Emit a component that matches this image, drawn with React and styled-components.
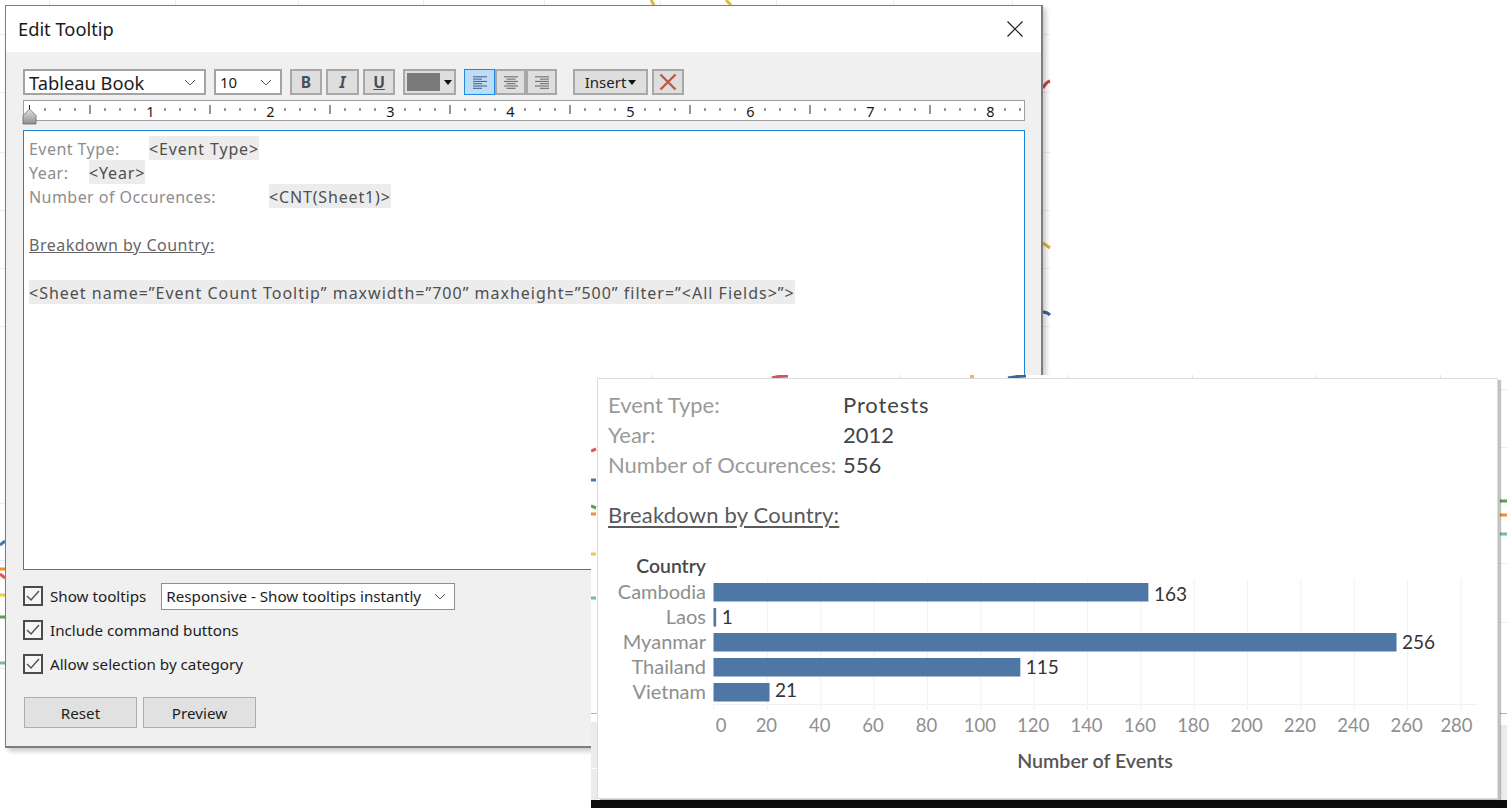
import React from "react";
import styled, { createGlobalStyle } from "styled-components";

const GlobalStyle = createGlobalStyle`
  html, body { margin: 0; padding: 0; background: #fff; }
  body { font-family: "Noto Sans", "Liberation Sans", sans-serif; }
`;

const UI = `"Noto Sans", "Liberation Sans", sans-serif`;
const BOOK = `"Lato", "Noto Sans", sans-serif`;

const Stage = styled.div`
  position: relative;
  width: 1507px;
  height: 808px;
  overflow: hidden;
  background: #fff;
`;
const BackdropArt = styled.svg`
  position: absolute;
  left: 0;
  top: 0;
`;
const Dialog = styled.section`
  position: absolute;
  left: 5px;
  top: 5px;
  width: 1038px;
  height: 743px;
  box-sizing: border-box;
  border: 1px solid #7d7d7d;
  border-right-width: 2px;
  border-bottom-width: 2px;
  background: #f0f0f0;
  box-shadow: 3px 3px 5px rgba(0, 0, 0, 0.22);
  display: flex;
  flex-direction: column;
`;
const TitleBar = styled.header`
  height: 46px;
  box-sizing: border-box;
  flex: none;
  background: #fff;
  display: flex;
  align-items: center;
  justify-content: space-between;
  padding: 0 18px 1px 12px;
  font: 400 18.3px ${UI};
  color: #1a1a1a;
`;
const Body = styled.div`
  padding: 17px 16px 0 17px;
  display: flex;
  flex-direction: column;
`;
const Toolbar = styled.div`
  display: flex;
  align-items: stretch;
  height: 26px;
`;
const SelectBox = styled.div`
  box-sizing: border-box;
  width: ${(p) => p.$w}px;
  height: ${(p) => p.$h || 26}px;
  margin: ${(p) => p.$m || "0"};
  border-style: solid;
  border-color: ${(p) => (p.$thick ? "#a3a3a3" : "#8f8f8f")};
  border-width: ${(p) => (p.$thick ? "2px" : "1px")};
  background: #fff;
  display: flex;
  align-items: center;
  justify-content: space-between;
  padding: ${(p) => p.$pad || "0 8px 0 4px"};
  font: 400 ${(p) => p.$fs}px ${UI};
  color: #1d1d1d;
  white-space: nowrap;
`;
const ToolButton = styled.div`
  box-sizing: border-box;
  width: ${(p) => p.$w}px;
  margin-left: ${(p) => p.$ml || 0}px;
  background: ${(p) => (p.$active ? "#bfdcf7" : "#dedede")};
  border: ${(p) => (p.$active ? "1px solid #1e88e5" : "2px solid #a8a8a8")};
  display: flex;
  align-items: center;
  justify-content: center;
  color: #47505c;
  font: ${(p) => p.$style || "700"} 15.5px ${UI};
  text-decoration: ${(p) => (p.$under ? "underline" : "none")};
`;
const ColorButton = styled(ToolButton)`
  justify-content: flex-start;
  gap: 4px;
  padding-left: 2px;
`;
const Swatch = styled.span`
  width: 33px;
  height: 18px;
  background: #7a7a7a;
`;
const Caret = styled.span`
  width: 0;
  height: 0;
  border-left: 4.5px solid transparent;
  border-right: 4.5px solid transparent;
  border-top: 5px solid #111;
`;
const InsertButton = styled(ToolButton)`
  font: 400 15px ${UI};
  color: #222;
  gap: 2px;
`;
const Ruler = styled.svg`
  display: block;
  margin-top: 5px;
  overflow: visible;
`;
const RulerDigit = styled.text`
  font: 400 14.5px ${UI};
  fill: #1a1a1a;
  text-anchor: middle;
`;
const Editor = styled.div`
  box-sizing: border-box;
  height: 440px;
  margin-top: 9px;
  border: 1px solid #1a83d6;
  background: #fff;
  padding: 5px 5px;
  font: 400 16px ${UI};
`;
const EditorLine = styled.div`
  height: 24px;
  line-height: 27px;
  display: flex;
  white-space: nowrap;
`;
const Caption = styled.span`
  width: ${(p) => p.$tab}px;
  flex: none;
  color: #8d8d8d;
  letter-spacing: 0.45px;
`;
const Chip = styled.span`
  background: #ececec;
  color: #4f4f4f;
  height: 24px;
  letter-spacing: ${(p) => p.$ls || 0.85}px;
`;
const Underlined = styled.span`
  color: #666;
  text-decoration: underline;
  letter-spacing: 0.5px;
`;
const Options = styled.div`
  margin-top: 9px;
  display: flex;
  flex-direction: column;
`;
const OptionRow = styled.div`
  height: 34px;
  display: flex;
  align-items: center;
  font: 400 15.2px ${UI};
  color: #1d1d1d;
  white-space: nowrap;
`;
const CheckBox = styled.span`
  box-sizing: border-box;
  width: 20px;
  height: 20px;
  flex: none;
  border: 2px solid #4b4b4b;
  background: #f6f6f6;
  margin-right: 7px;
  display: flex;
  align-items: center;
  justify-content: center;
`;
const Actions = styled.div`
  display: flex;
  gap: 6px;
  margin: 16px 0 0 1px;
`;
const PushButton = styled.div`
  box-sizing: border-box;
  width: 113px;
  height: 31px;
  background: #e1e1e1;
  border: 1px solid #adadad;
  display: flex;
  align-items: center;
  justify-content: center;
  font: 400 15.2px ${UI};
  color: #1d1d1d;
`;
const Shot = styled.div`
  position: absolute;
  left: 591px;
  top: 375px;
  width: 916px;
  height: 433px;
  background: #fff;
`;
const ShotEdge = styled.div`
  position: absolute;
  left: 0;
  right: 0;
  bottom: 0;
  height: 8px;
  background: #0c0c0c;
`;
const Popup = styled.section`
  position: absolute;
  left: 6px;
  top: 3px;
  width: 901px;
  height: 421px;
  box-sizing: border-box;
  border: 1px solid #dcdcdc;
  background: #fff;
  box-shadow: 3px 2px 1px rgba(0, 0, 0, 0.24);
`;
const Summary = styled.div`
  padding: 11px 0 0 10px;
  font: 400 22px ${BOOK};
`;
const SummaryRow = styled.div`
  display: grid;
  grid-template-columns: 235px auto;
  height: 30px;
  line-height: 30px;
  white-space: nowrap;
`;
const SummaryLabel = styled.span`
  color: #9a9a9a;
`;
const SummaryValue = styled.span`
  color: #444;
  letter-spacing: ${(p) => p.$ls || 0}px;
`;
const SummaryHeading = styled.div`
  margin-top: 20px;
  height: 30px;
  line-height: 30px;
  color: #5a5a5a;
  text-decoration: underline;
  text-underline-offset: 3px;
  letter-spacing: 0.2px;
`;
const ChartSvg = styled.svg`
  display: block;
  margin-top: 15px;
`;
const CountryName = styled.text`
  font: 400 20px ${BOOK};
  fill: #8e8e8e;
  text-anchor: end;
`;
const CountryHead = styled.text`
  font: 600 19.4px ${BOOK};
  fill: #4a4a4a;
  text-anchor: end;
`;
const BarValue = styled.text`
  font: 400 19px ${BOOK};
  fill: #333;
`;
const TickLabel = styled.text`
  font: 400 18.5px ${BOOK};
  fill: #8f8f8f;
  text-anchor: middle;
`;
const AxisTitle = styled.text`
  font: 600 19.6px ${BOOK};
  fill: #555;
  text-anchor: middle;
`;

const Chevron = ({ w = 12, h = 7, c = "#5c5c5c" }) => (
  <svg width={w} height={h} viewBox="0 0 12 7" fill="none">
    <path d="M1 1l5 5 5-5" stroke={c} strokeWidth="1" />
  </svg>
);

const Tick = () => (
  <svg width="14" height="12" viewBox="0 0 14 12" fill="none">
    <path d="M1 6l4 4 8-9" stroke="#555" strokeWidth="1.5" />
  </svg>
);

const AlignIcon = ({ kind, c = "#5d6670" }) => {
  const rows = [0, 1, 2, 3, 4, 5];
  return (
    <svg width="14" height="13" viewBox="0 0 14 13">
      {rows.map((i) => {
        const w = i % 2 === 0 ? 14 : 9;
        const x = kind === "left" ? 0 : kind === "right" ? 14 - w : (14 - w) / 2;
        return <rect key={i} x={x} y={i * 2.3 + 0.3} width={w} height="1" fill={c} />;
      })}
    </svg>
  );
};

const RulerArt = () => {
  const smalls = [];
  const halves = [];
  const digits = [];
  for (let i = 0; i <= 8; i++) {
    const o = 6.5 + i * 120;
    [15, 30, 45, 75, 90, 105].forEach((d) => {
      if (o + d < 1000) smalls.push(o + d);
    });
    if (i < 8) {
      halves.push(o + 60);
      digits.push({ n: i + 1, x: o + 121 });
    }
  }
  return (
    <Ruler width="1002" height="21" viewBox="0 0 1002 21">
      <rect x="0.5" y="0.5" width="1001" height="20" fill="#fff" stroke="#9e9e9e" />
      <rect x="6" y="5" width="1" height="5" fill="#222" />
      {smalls.map((x) => (
        <rect key={x} x={x} y="8" width="1" height="3" fill="#333" />
      ))}
      {halves.map((x) => (
        <rect key={x} x={x} y="5" width="1" height="9" fill="#333" />
      ))}
      {digits.map((d) => (
        <RulerDigit key={d.n} x={d.x} y="17">
          {d.n}
        </RulerDigit>
      ))}
      <defs>
        <linearGradient id="thumb" x1="0" y1="0" x2="0" y2="1">
          <stop offset="0" stopColor="#e4e4e4" />
          <stop offset="1" stopColor="#8f8f8f" />
        </linearGradient>
      </defs>
      <path d="M6.5 9L13 15.5V24H0V15.5Z" fill="url(#thumb)" stroke="#666" strokeWidth="0.8" />
    </Ruler>
  );
};

const Curve = ({ d, c }) => <path d={d} fill="none" stroke={c} strokeWidth="3" />;

const Backdrop = () => (
  <BackdropArt width="1507" height="808" viewBox="0 0 1507 808">
    {[49, 175, 298, 423, 544, 660, 776, 893, 1012].map((x) => (
      <rect key={x} x={x} y="0" width="1" height="5" fill="#ececec" />
    ))}
    {[34, 92, 152, 210, 268, 326, 503, 560, 668].map((y) => (
      <rect key={y} x="0" y={y} width="5" height="1" fill="#ececec" />
    ))}
    {[34, 92, 152, 210, 268, 326].map((y) => (
      <rect key={y} x="1042" y={y} width="8" height="1" fill="#ececec" />
    ))}
    <Curve d="M651 0L654 5" c="#e2b93b" />
    <Curve d="M726 0L731 5" c="#e2b93b" />
    <Curve d="M1043 88C1045 84 1047 82 1050 81" c="#c8434d" />
    <Curve d="M1043 243L1050 248" c="#dcb13a" />
    <Curve d="M1043 312C1046 312 1048 313 1050 315" c="#34679c" />
    <Curve d="M0 545L5 541" c="#4e79a7" />
    <Curve d="M0 569L5 569" c="#f28e2b" />
    <Curve d="M0 574L5 578" c="#e15759" />
    <Curve d="M0 595L5 595" c="#edc948" />
    <Curve d="M0 617L5 617" c="#59a14f" />
    <Curve d="M0 663L5 663" c="#76b7b2" />
  </BackdropArt>
);

const ShotBackground = () => (
  <BackdropArt width="916" height="433" viewBox="591 375 916 433">
    {[652, 776, 900, 1068, 1192, 1316, 1440].map((x) => (
      <rect key={x} x={x} y="375" width="1" height="3" fill="#e6e6e6" />
    ))}
    <rect x="591" y="722" width="6" height="78" fill="#ebebeb" />
    <rect x="1500" y="725" width="7" height="75" fill="#ebebeb" />
    <rect x="591" y="713" width="6" height="1" fill="#b5b5b5" />
    <rect x="1500" y="713" width="7" height="1" fill="#b5b5b5" />
    <rect x="591" y="768" width="6" height="1" fill="#fff" />
    {[389, 447, 563, 622].map((y) => (
      <rect key={y} x="1500" y={y} width="7" height="1" fill="#ececec" />
    ))}
    <path d="M772 378C777 376 783 376 788 376" fill="none" stroke="#d9525c" strokeWidth="3" />
    <rect x="970" y="375" width="4" height="3" fill="#e6c04a" />
    <path d="M1008 378C1013 377 1019 376 1026 376" fill="none" stroke="#34679c" strokeWidth="3" />
    <Curve d="M591 451L596 449" c="#e15759" />
    <Curve d="M591 480L596 480" c="#4e79a7" />
    <Curve d="M591 506L596 508" c="#59a14f" />
    <Curve d="M591 514L596 514" c="#f28e2b" />
    <Curve d="M591 554L596 554" c="#edc948" />
    <Curve d="M591 598L596 598" c="#76b7b2" />
    <Curve d="M1500 501L1507 501" c="#59a14f" />
    <Curve d="M1500 515L1507 515" c="#f28e2b" />
    <Curve d="M1500 534L1507 534" c="#76b7b2" />
  </BackdropArt>
);

const COUNTRIES = [
  { name: "Cambodia", value: 163, lift: 18 },
  { name: "Laos", value: 1, lift: 16 },
  { name: "Myanmar", value: 256, lift: 16 },
  { name: "Thailand", value: 115, lift: 16 },
  { name: "Vietnam", value: 21, lift: 14 },
];
const X0 = 713.5;
const SCALE = 2.668;
const TICKS = [0, 20, 40, 60, 80, 100, 120, 140, 160, 180, 200, 220, 240, 260, 280];

const Chart = () => (
  <ChartSvg width="899" height="240" viewBox="598 545 899 240">
    {TICKS.slice(1).map((t) => (
      <rect key={t} x={X0 + t * SCALE} y="579" width="1" height="131" fill="#f1f1f1" />
    ))}
    <rect x={X0 - 0.5} y="704" width="765" height="1" fill="#f1f1f1" />
    <rect x={X0 - 0.5} y="704" width="1" height="6" fill="#f1f1f1" />
    <CountryHead x="706" y="573">
      Country
    </CountryHead>
    {COUNTRIES.map((c, i) => {
      const y = 583 + i * 25;
      const w = Math.max(c.value * SCALE, 1.6);
      return (
        <g key={c.name}>
          <CountryName x="706" y={y + 15.5}>
            {c.name}
          </CountryName>
          <rect x={X0} y={y} width={w} height="18.5" fill="#4e77a5" />
          <BarValue x={X0 + w + 5.5} y={y + c.lift}>
            {c.value}
          </BarValue>
        </g>
      );
    })}
    {TICKS.map((t) => (
      <TickLabel key={t} x={t === 0 ? 721 : t === 280 ? 1456.5 : X0 + t * SCALE - 0.5} y="732">
        {t}
      </TickLabel>
    ))}
    <AxisTitle x="1095" y="768">
      Number of Events
    </AxisTitle>
  </ChartSvg>
);

export default function App() {
  return (
    <Stage>
      <GlobalStyle />
      <Backdrop />
      <Dialog>
        <TitleBar>
          <span>Edit Tooltip</span>
          <svg width="16" height="16" viewBox="0 0 16 16" fill="none">
            <path d="M0.5 0.5L15.5 15.5M15.5 0.5L0.5 15.5" stroke="#1a1a1a" strokeWidth="1.2" />
          </svg>
        </TitleBar>
        <Body>
          <Toolbar>
            <SelectBox $w={183} $fs={18.3} $thick>
              <span>Tableau Book</span>
              <Chevron />
            </SelectBox>
            <SelectBox $w={68} $fs={15} $thick $m="0 0 0 8px">
              <span>10</span>
              <Chevron />
            </SelectBox>
            <ToolButton $w={32} $ml={8}>B</ToolButton>
            <ToolButton $w={33} $ml={4} $style="italic 700">I</ToolButton>
            <ToolButton $w={32} $ml={4} $under>U</ToolButton>
            <ColorButton $w={53} $ml={8}>
              <Swatch />
              <Caret />
            </ColorButton>
            <ToolButton $w={31} $ml={8} $active>
              <AlignIcon kind="left" c="#3f5f80" />
            </ToolButton>
            <ToolButton $w={31}>
              <AlignIcon kind="center" />
            </ToolButton>
            <ToolButton $w={31}>
              <AlignIcon kind="right" />
            </ToolButton>
            <InsertButton $w={75} $ml={16}>
              Insert
              <Caret />
            </InsertButton>
            <ToolButton $w={32} $ml={4}>
              <svg width="18" height="18" viewBox="0 0 18 18" fill="none">
                <path d="M1.5 1.5L16.5 16.5M16.5 1.5L1.5 16.5" stroke="#bd5a44" strokeWidth="2.4" />
              </svg>
            </ToolButton>
          </Toolbar>
          <RulerArt />
          <Editor>
            <EditorLine>
              <Caption $tab={120}>Event Type:</Caption>
              <Chip>&lt;Event Type&gt;</Chip>
            </EditorLine>
            <EditorLine>
              <Caption $tab={60}>Year:</Caption>
              <Chip>&lt;Year&gt;</Chip>
            </EditorLine>
            <EditorLine>
              <Caption $tab={240}>Number of Occurences:</Caption>
              <Chip>&lt;CNT(Sheet1)&gt;</Chip>
            </EditorLine>
            <EditorLine />
            <EditorLine>
              <Underlined>Breakdown by Country:</Underlined>
            </EditorLine>
            <EditorLine />
            <EditorLine>
              <Chip $ls={1}>&lt;Sheet name=”Event Count Tooltip” maxwidth=”700” maxheight=”500” filter=”&lt;All Fields&gt;”&gt;</Chip>
            </EditorLine>
          </Editor>
          <Options>
            <OptionRow>
              <CheckBox><Tick /></CheckBox>
              <span>Show tooltips</span>
              <SelectBox $w={294} $h={27} $fs={15.2} $m="0 0 0 15px" $pad="0 8px 0 4px">
                <span>Responsive - Show tooltips instantly</span>
                <Chevron />
              </SelectBox>
            </OptionRow>
            <OptionRow>
              <CheckBox><Tick /></CheckBox>
              <span>Include command buttons</span>
            </OptionRow>
            <OptionRow>
              <CheckBox><Tick /></CheckBox>
              <span>Allow selection by category</span>
            </OptionRow>
          </Options>
          <Actions>
            <PushButton>Reset</PushButton>
            <PushButton>Preview</PushButton>
          </Actions>
        </Body>
      </Dialog>
      <Shot>
        <ShotBackground />
        <ShotEdge />
        <Popup>
          <Summary>
            <SummaryRow>
              <SummaryLabel>Event Type:</SummaryLabel>
              <SummaryValue $ls={0.9}>Protests</SummaryValue>
            </SummaryRow>
            <SummaryRow>
              <SummaryLabel>Year:</SummaryLabel>
              <SummaryValue>2012</SummaryValue>
            </SummaryRow>
            <SummaryRow>
              <SummaryLabel>Number of Occurences:</SummaryLabel>
              <SummaryValue>556</SummaryValue>
            </SummaryRow>
            <SummaryHeading>Breakdown by Country:</SummaryHeading>
          </Summary>
          <Chart />
        </Popup>
      </Shot>
    </Stage>
  );
}
